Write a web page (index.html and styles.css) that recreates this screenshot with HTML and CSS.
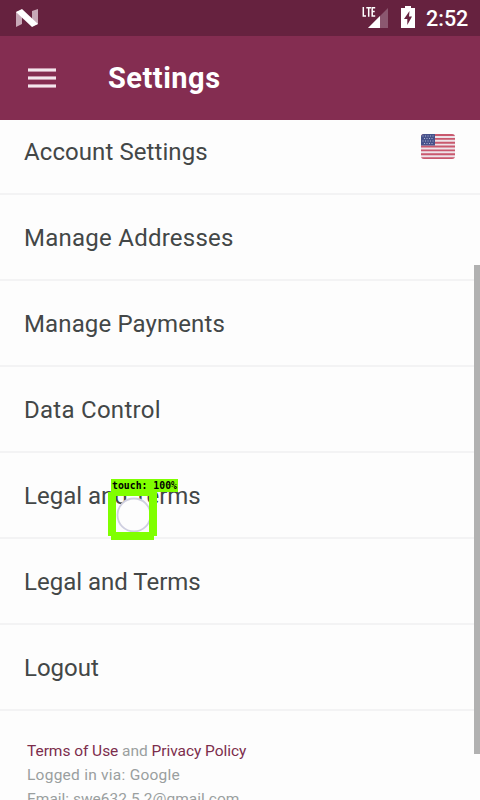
FILE: index.html
```
<!DOCTYPE html>
<html lang="en">
<head>
<meta charset="utf-8">
<title>Settings</title>
<link rel="stylesheet" href="styles.css">
</head>
<body>
<div class="screen">
  <div class="status">
    <svg class="nlogo" width="22" height="19" viewBox="0 0 22 19"><path d="M0 3L6 1v14L0 18zM16 2L22 0v15l-6 2z" fill="#c7a8b7"/><path d="M0 3L6 0l16 15-6 3z" fill="#fff"/></svg>
    <svg class="signal" width="28" height="24" viewBox="0 0 28 24"><path d="M26 3v20H6z" fill="#8b5870"/><path d="M18 11v12H6z" fill="#fff"/><path d="M1.300 2v9H4M4.300 2.700h4.700M6.700 2.700V11.700M13.200 2.700h-3v8.300h3M10.200 6.600h2.500" fill="none" stroke="#fff" stroke-width="1.500"/></svg>
    <svg class="battery" width="14" height="22" viewBox="0 0 14 22"><path d="M4 0h6v2h4v20H0V2h4z" fill="#fff"/><path d="M8.500 5L3 13h3.300v6L11 10.500H8z" fill="#66223f"/></svg>
    <span class="clock">2:52</span>
  </div>
  <header class="bar">
    <div class="burger"><i></i><i></i><i></i></div>
    <h1>Settings</h1>
  </header>
  <main class="content">
    <div class="row first"><span class="account">Account Settings</span>
      <svg class="flag" width="34" height="25" viewBox="0 0 34 25"><defs><clipPath id="c"><rect width="34" height="25" rx="3"/></clipPath></defs><g clip-path="url(#c)"><path fill="#eee3e9" d="M0 0h34v25H0z"/><path d="M0 1h34M0 4.850h34M0 8.700h34M0 12.550h34M0 16.400h34M0 20.250h34M0 24.100h34" stroke="#c9596e" stroke-width="1.900"/><path fill="#47528b" d="M0 0h14v11.500H0z"/><path d="M1.500 2h12M3 4.500h10M1.500 7h12M3 9.500h10" stroke="#aeb4d2" stroke-width="1" stroke-dasharray="1 1.500"/></g></svg>
    </div>
    <div class="row"><span class="addresses">Manage Addresses</span></div>
    <div class="row"><span class="payments">Manage Payments</span></div>
    <div class="row"><span class="data">Data Control</span></div>
    <div class="row"><span>Legal and Terms</span></div>
    <div class="row"><span>Legal and Terms</span></div>
    <div class="row"><span>Logout</span></div>
    <footer>
      <p class="links"><a>Terms of Use</a> and <a>Privacy Policy</a></p>
      <p class="login">Logged in via: Google</p>
      <p>Email: swe632.5.2@gmail.com</p>
    </footer>
  </main>
  <div class="scrollbar"></div>
  <svg class="touch" width="72" height="64" viewBox="0 0 72 64"><circle cx="26" cy="37" r="16.500" fill="#fdfdfd" stroke="#cfcfe0" stroke-width="1.800"/><path fill="#80ff00" fill-rule="evenodd" d="M3 1h67v13H49v44h-3v4H3v-4H0V14h3zM8 18v36h33V18z"/><text x="4" y="11" textLength="65" lengthAdjust="spacingAndGlyphs">touch: 100%</text></svg>
</div>
</body>
</html>
```
FILE: styles.css
```
* { box-sizing: border-box; }
body { margin: 0; background: #fdfdfd; font-family: Roboto, sans-serif; }
.screen { position: relative; width: 480px; height: 800px; overflow: hidden; display: flex; flex-direction: column; }
.status { height: 36px; flex: none; background: #66223f; display: flex; align-items: flex-start; padding: 0 12px 0 16px; }
.nlogo { margin-top: 9px; }
.signal { margin: 5px 0 0 auto; }
.battery { margin: 6px 11px 0 11px; }
.clock { width: 42px; color: #fff; font-size: 21.500px; font-weight: 500; line-height: 37px; white-space: nowrap; }
.bar { height: 84px; flex: none; background: #842d51; display: flex; align-items: center; padding-left: 28px; }
.burger { width: 28px; height: 20px; display: flex; flex-direction: column; justify-content: space-between; }
.burger i { height: 4px; background: #f3e6ec; border: solid #c795ab; border-width: 1px 0; }
h1 { margin: 0 0 0 52px; color: #fff; font-size: 29px; line-height: 40px; font-weight: 700; letter-spacing: 0.500px; }
.content { flex: 1; min-height: 0; }
.row { height: 86px; border-bottom: 2px solid #f3f3f4; padding: 2px 25px 0 24px; display: flex; align-items: center; justify-content: space-between; color: #434747; font-size: 24px; white-space: nowrap; }
.row.first { height: 75px; padding-top: 0; padding-bottom: 9px; }
.account { letter-spacing: 0.080px; }
.addresses { letter-spacing: 0.250px; }
.payments { letter-spacing: 0.130px; }
.data { letter-spacing: 0.270px; }
.flag { margin-bottom: 11px; }
footer { padding: 28px 0 0 27px; color: #9a9f9f; font-size: 15.500px; line-height: 24px; white-space: nowrap; }
footer p { margin: 0; }
footer a { color: #7c2d4c; }
.links { letter-spacing: -0.040px; }
.login { letter-spacing: 0.250px; }
.scrollbar { position: absolute; right: 0; top: 265px; width: 6px; height: 489px; background: #b1b1b1; }
.touch { position: absolute; left: 108px; top: 478px; }
.touch text { font: bold 10px "DejaVu Sans Mono", monospace; fill: #000; }
```
